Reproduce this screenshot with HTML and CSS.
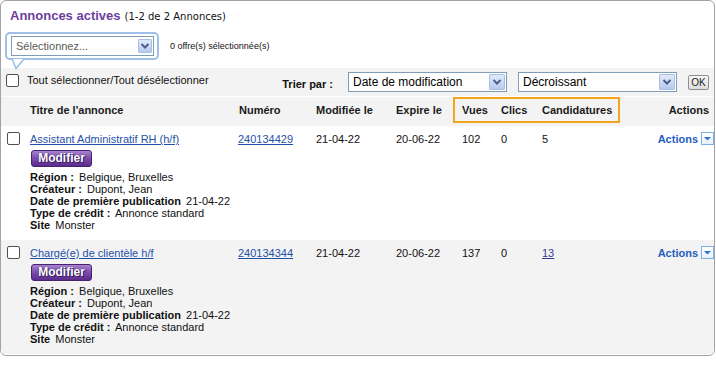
FILE: index.html
```html
<!DOCTYPE html>
<html lang="fr">
<head>
<meta charset="utf-8">
<title>Annonces actives</title>
<link rel="stylesheet" href="styles.css">
</head>
<body>
<div class="panel">
  <div class="title"><span class="t-main">Annonces actives</span> <span class="t-count">(1-2 de 2 Annonces)</span></div>

  <div class="bulk">
    <div class="bubble">
      <div class="sel sel-bulk">
        <span class="sel-text placeholder">Sélectionnez...</span>
        <span class="arrow"><svg width="10" height="8" viewBox="0 0 10 8"><path d="M1.5 2 L5 5.5 L8.5 2" fill="none" stroke="#4b5f88" stroke-width="2"/></svg></span>
      </div>
      <svg class="tail" width="16" height="11" viewBox="0 0 16 11"><polygon points="1,0 13,0 5,9.5" fill="#fff"/><path d="M1 0 L5 9.5 L13 0" fill="none" stroke="#9dbfe8" stroke-width="1.6"/></svg>
    </div>
    <span class="bulk-count">0 offre(s) sélectionnée(s)</span>
  </div>

  <div class="toolbar">
    <div class="selall"><span class="cb"></span><span>Tout sélectionner/Tout désélectionner</span></div>
    <div class="sort">
      <span class="sort-label">Trier par :</span>
      <div class="sel sel-sort">
        <span class="sel-text">Date de modification</span>
        <span class="arrow"><svg width="10" height="8" viewBox="0 0 10 8"><path d="M1.5 2 L5 5.5 L8.5 2" fill="none" stroke="#4b5f88" stroke-width="2"/></svg></span>
      </div>
      <div class="sel sel-sort">
        <span class="sel-text">Décroissant</span>
        <span class="arrow"><svg width="10" height="8" viewBox="0 0 10 8"><path d="M1.5 2 L5 5.5 L8.5 2" fill="none" stroke="#4b5f88" stroke-width="2"/></svg></span>
      </div>
      <span class="ok">OK</span>
    </div>
  </div>

  <div class="grid head">
    <div class="c"></div>
    <div class="c">Titre de l'annonce</div>
    <div class="c c-num">Numéro</div>
    <div class="c">Modifiée le</div>
    <div class="c">Expire le</div>
    <div class="hl">
      <span>Vues</span><span>Clics</span><span>Candidatures</span>
    </div>
    <div class="c c-act">Actions</div>
  </div>

  <div class="grid row">
    <div><span class="cb"></span></div>
    <div>
      <a class="lnk" href="#">Assistant Administratif RH (h/f)</a>
      <span class="btn-mod">Modifier</span>
      <div class="details">
        <div><b>Région :</b> Belgique, Bruxelles</div>
        <div><b>Créateur :</b> Dupont, Jean</div>
        <div><b>Date de première publication</b> 21-04-22</div>
        <div><b>Type de crédit :</b> Annonce standard</div>
        <div><b>Site</b> Monster</div>
      </div>
    </div>
    <div><a class="lnk" href="#">240134429</a></div>
    <div>21-04-22</div>
    <div>20-06-22</div>
    <div>102</div>
    <div>0</div>
    <div>5</div>
    <div class="act"><span>Actions</span><span class="act-btn"><svg width="11" height="11" viewBox="0 0 11 11"><polygon points="2,4 9,4 5.5,7.5" fill="#2f74d0"/></svg></span></div>
  </div>

  <div class="grid row alt">
    <div><span class="cb"></span></div>
    <div>
      <a class="lnk" href="#">Chargé(e) de clientèle h/f</a>
      <span class="btn-mod">Modifier</span>
      <div class="details">
        <div><b>Région :</b> Belgique, Bruxelles</div>
        <div><b>Créateur :</b> Dupont, Jean</div>
        <div><b>Date de première publication</b> 21-04-22</div>
        <div><b>Type de crédit :</b> Annonce standard</div>
        <div><b>Site</b> Monster</div>
      </div>
    </div>
    <div><a class="lnk" href="#">240134344</a></div>
    <div>21-04-22</div>
    <div>20-06-22</div>
    <div>137</div>
    <div>0</div>
    <div><a class="lnk lnk-v" href="#">13</a></div>
    <div class="act"><span>Actions</span><span class="act-btn"><svg width="11" height="11" viewBox="0 0 11 11"><polygon points="2,4 9,4 5.5,7.5" fill="#2f74d0"/></svg></span></div>
  </div>
</div>
</body>
</html>
```

FILE: styles.css
```css
* { box-sizing: border-box; }
html, body { margin: 0; padding: 0; background: #fff; }
body {
  font-family: "Liberation Sans", Arial, sans-serif;
  font-size: 11px;
  color: #111;
}

.panel {
  width: 715px;
  height: 356px;
  border: 1px solid #a3a3a3;
  border-radius: 6px;
  overflow: hidden;
}

/* title */
.title {
  height: 31px;
  padding: 6px 10px 0 9px;
  line-height: 18px;
  white-space: nowrap;
}
.t-main { font-size: 13px; font-weight: bold; color: #6b3fa0; }
.t-count {
  font-family: "DejaVu Sans", Verdana, sans-serif;
  font-size: 10px;
  color: #111;
  margin-left: 1px;
}

/* bulk actions */
.bulk {
  display: flex;
  align-items: center;
  gap: 11px;
  height: 36px;
  padding: 0 0 8px 4px;
}
.bubble {
  position: relative;
  border: 2px solid #9dbfe8;
  border-radius: 5px;
  padding: 2px 3px 2px 4px;
  background: #fff;
}
.tail { position: absolute; left: 4px; top: calc(100% + 1px); display: block; }
.bulk-count { font-size: 9px; color: #111; }

/* select */
.sel {
  display: flex;
  align-items: center;
  height: 20px;
  padding-left: 4px;
  border: 1px solid #7f9db9;
  background: #fff;
  font-size: 12px;
  color: #000;
}
.sel-text { flex: 1; white-space: nowrap; overflow: hidden; }
.placeholder { color: #5a5a5a; font-size: 11px; }
.sel-bulk { width: 143px; }
.arrow {
  width: 14px;
  height: 14px;
  margin-right: 1px;
  border: 1px solid #a9bfe4;
  border-radius: 1px;
  background: linear-gradient(#e0eafa, #b6caee);
  display: flex;
  align-items: center;
  justify-content: center;
}
.sel-sort { width: 159px; margin-right: 11px; }
.sel-sort .arrow { width: 16px; height: 16px; }

/* toolbar */
.toolbar {
  display: flex;
  align-items: flex-start;
  height: 28px;
  margin-bottom: 1px;
  padding: 4px 5px 0 5px;
  background: #f3f3f3;
}
.selall {
  display: flex;
  align-items: center;
  gap: 8px;
  margin-top: 1px;
  line-height: 14px;
  color: #111;
}
.cb {
  display: block;
  width: 13px;
  height: 13px;
  border: 1px solid #4f4f4f;
  border-radius: 2px;
  background: #fff;
}
.sort { margin-left: auto; display: flex; align-items: center; }
.sort-label {
  align-self: flex-end;
  margin: 0 15px 1px 0;
  font-weight: bold;
  line-height: 14px;
}
.ok {
  display: flex;
  align-items: center;
  justify-content: center;
  width: 21px;
  height: 15px;
  border: 1px solid #8e8e8e;
  border-radius: 2px;
  background: linear-gradient(#f7f7f7, #dcdcdc);
  font-size: 10px;
  color: #222;
}

/* table grid */
.grid {
  display: grid;
  grid-template-columns: 23px 208px 78px 80px 66px 39px 41px 1fr auto;
  padding-left: 6px;
}
.head {
  height: 29px;
  align-items: start;
  padding-right: 5px;
  background: #f3f3f3;
  font-weight: bold;
  color: #1a1a1a;
}
.head .c { padding-top: 6px; line-height: 14px; }
.head .c-num { padding-left: 1px; }
.hl {
  grid-column: 6 / 9;
  justify-self: start;
  margin-left: -9px;
  width: 167px;
  height: 26px;
  border: 2px solid #f2a51c;
  padding: 4px 0 0 7px;
  display: grid;
  grid-template-columns: 39px 41px auto;
  line-height: 14px;
  white-space: nowrap;
}
.c-act { justify-self: end; }

.row {
  align-items: start;
  padding: 6px 0 9px 6px;
  line-height: 14px;
}
.alt { background: #f3f3f3; }

.lnk { color: #1f51a8; text-decoration: underline; }
.lnk-v { color: #3a3a94; }

.btn-mod {
  display: block;
  width: 61px;
  height: 17px;
  margin: 4px 0 0 1px;
  border: 1px solid #48226e;
  border-radius: 3px;
  background: linear-gradient(#a884cf, #7a4bab 50%, #5b2b8c);
  color: #fff;
  font-size: 12px;
  font-weight: bold;
  line-height: 15px;
  text-align: center;
  text-shadow: 0 0 1px #2c0d4d, 1px 1px 0 #3d1a63;
}

.details { margin-top: 4px; line-height: 12px; color: #111; }
.details b { margin-right: 2px; }

.act {
  display: flex;
  align-items: flex-start;
  gap: 3px;
  font-weight: bold;
  color: #1f5fbf;
}
.act-btn {
  display: flex;
  align-items: center;
  justify-content: center;
  width: 13px;
  height: 13px;
  border: 1px solid #7eaee6;
  background: linear-gradient(#ffffff, #e6effb);
}
```
